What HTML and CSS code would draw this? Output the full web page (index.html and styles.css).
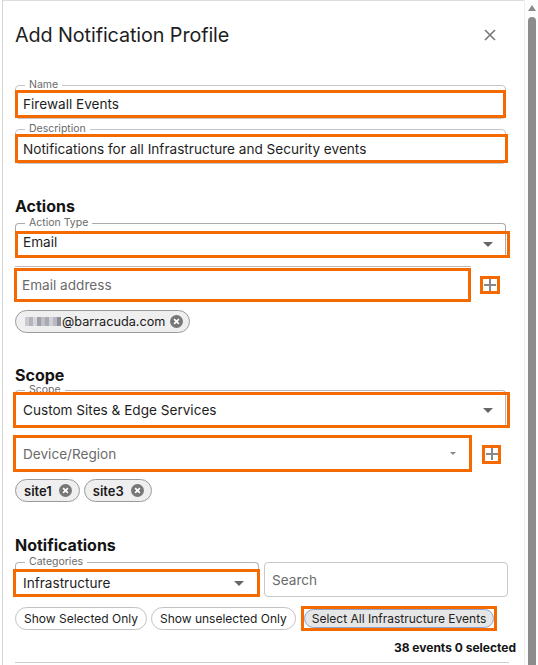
FILE: index.html
```html
<!DOCTYPE html>
<html>
<head>
<meta charset="utf-8">
<link rel="stylesheet" href="styles.css">
</head>
<body>
<div class="frame">
  <div class="content">
    <div class="header">
      <h1 class="title">Add Notification Profile</h1>
      <svg class="close" width="12" height="12" viewBox="0 0 12 12"><path d="M1 1L11 11M11 1L1 11" stroke="#777" stroke-width="1.6" fill="none"/></svg>
    </div>

    <div class="outlined f-name">
      <span class="lbl">Name</span>
      <div class="hl hl-text">Firewall Events</div>
    </div>

    <div class="outlined f-desc">
      <span class="lbl">Description</span>
      <div class="hl hl-text wide">Notifications for all Infrastructure and Security events</div>
    </div>

    <h2 class="section s-actions">Actions</h2>

    <div class="outlined f-action">
      <span class="lbl">Action Type</span>
      <div class="hl hl-select ext">Email<span class="caret"></span></div>
    </div>

    <div class="row-add r-email">
      <div class="topline">
        <div class="hl hl-input placeholder">Email address</div>
      </div>
      <div class="plus"><svg width="12" height="12" viewBox="0 0 12 12"><path d="M6 0V12M0 6H12" stroke="#888" stroke-width="2" fill="none"/></svg></div>
    </div>

    <div class="chips c-email">
      <span class="chip"><span class="mosaic"><i class="m1"></i><i class="m2"></i><i class="m3"></i><i class="m4"></i><i class="m5"></i><i class="m6"></i><i class="m7"></i><i class="m8"></i><i class="m9"></i></span>@barracuda.com<span class="del"><svg width="13" height="13" viewBox="0 0 12 12"><circle cx="6" cy="6" r="6" fill="#777"/><path d="M3.8 3.8L8.2 8.2M8.2 3.8L3.8 8.2" stroke="#fff" stroke-width="1.5"/></svg></span></span>
    </div>

    <h2 class="section s-scope">Scope</h2>

    <div class="outlined f-scope">
      <span class="lbl">Scope</span>
      <div class="hl hl-select tall ext2">Custom Sites &amp; Edge Services<span class="caret"></span></div>
    </div>

    <div class="row-add r-device">
      <div class="hl hl-input tall2 placeholder dev">Device/Region<span class="caret small"></span></div>
      <div class="plus p2"><svg width="12" height="12" viewBox="0 0 12 12"><path d="M6 0V12M0 6H12" stroke="#888" stroke-width="2" fill="none"/></svg></div>
    </div>

    <div class="chips c-sites">
      <span class="chip med">site1<span class="del"><svg width="13" height="13" viewBox="0 0 12 12"><circle cx="6" cy="6" r="6" fill="#777"/><path d="M3.8 3.8L8.2 8.2M8.2 3.8L3.8 8.2" stroke="#fff" stroke-width="1.5"/></svg></span></span>
      <span class="chip med">site3<span class="del"><svg width="13" height="13" viewBox="0 0 12 12"><circle cx="6" cy="6" r="6" fill="#777"/><path d="M3.8 3.8L8.2 8.2M8.2 3.8L3.8 8.2" stroke="#fff" stroke-width="1.5"/></svg></span></span>
    </div>

    <h2 class="section s-notif">Notifications</h2>

    <div class="cat-row">
      <div class="outlined f-cat">
        <span class="lbl">Categories</span>
        <div class="hl hl-select cat">Infrastructure<span class="caret"></span></div>
      </div>
      <div class="search placeholder">Search</div>
    </div>

    <div class="btn-row">
      <span class="pill">Show Selected Only</span>
      <span class="pill">Show unselected Only</span>
      <span class="hl-btn"><span class="pill active">Select All Infrastructure Events</span></span>
    </div>

    <div class="count">38 events 0 selected</div>
    <div class="bottom-line"></div>
  </div>

  <div class="scrollbar">
    <div class="sb-arrow"></div>
    <div class="sb-thumb"></div>
  </div>
</div>
</body>
</html>
```

FILE: styles.css
```css
* { box-sizing: border-box; }
html, body { margin: 0; padding: 0; background: #fff; }
body {
  font-family: Inter, "Noto Sans", sans-serif;
  color: #1c1c1c;
  width: 538px;
  height: 665px;
  overflow: hidden;
}
.frame {
  position: relative;
  margin-left: 2px;
  height: 665px;
  border-left: 1px solid #d4d4d4;
  border-top: 1px solid #dcdcdc;
}
.content {
  width: 505px;
  padding-left: 12px;
}
.header {
  display: flex;
  align-items: center;
  justify-content: space-between;
  padding-top: 22px;
  height: 46px;
}
.title {
  margin: 0;
  font-size: 19.8px;
  line-height: 24px;
  font-weight: 400;
  color: #1e1e1e;
  letter-spacing: -0.1px;
}
.close { margin-right: 12px; margin-top: 0; }

.outlined {
  position: relative;
  border: 1px solid #c6c6c6;
  border-radius: 4px;
}
.lbl {
  position: absolute;
  left: 9px;
  top: -8px;
  padding: 0 4px;
  background: #fff;
  font-size: 10.5px;
  line-height: 13px;
  color: #6a6a6a;
}
.hl {
  position: relative;
  z-index: 2;
  border: 3px solid #f46a00;
  background: transparent;
  font-size: 13.6px;
  color: #1e1e1e;
  display: flex;
  align-items: center;
  padding-left: 5px;
}
.f-name { margin-top: 38px; padding-top: 4px; margin-right: 2px; }
.f-name .hl { height: 28px; margin-left: -1px; margin-right: -1px; }
.f-desc { margin-top: 10px; padding-top: 4px; margin-right: 2px; }
.f-desc .hl { height: 29px; margin-left: -1px; margin-right: -3px; }

.section {
  margin: 0;
  font-size: 16px;
  line-height: 16px;
  font-weight: 700;
  color: #141414;
}
.s-actions { margin-top: 34px; }
.s-scope { margin-top: 34px; }
.s-notif { margin-top: 35px; }

.f-action { margin-top: 9px; padding-top: 7px; border-color: #ababab; border-bottom: none; margin-right: 2px; }
.hl-select { justify-content: space-between; padding-right: 14px; }
.f-action .hl { height: 27px; margin-left: -1px; margin-right: -5px; align-items: flex-start; line-height: 16px; padding-top: 0; }
.caret {
  width: 0; height: 0;
  border-left: 5px solid transparent;
  border-right: 5px solid transparent;
  border-top: 5px solid #666;
  align-self: center;
}
.caret.small {
  border-left-width: 3px;
  border-right-width: 3px;
  border-top-width: 3px;
  border-top-color: #888;
}

.row-add {
  display: flex;
  align-items: center;
}
.r-email { margin-top: 8px; }
.topline {
  border-top: 1px solid #bdbdbd;
  padding-top: 1px;
  width: 456px;
}
.hl-input { height: 34px; }
.topline .hl { margin-left: -1px; }
.placeholder { color: #6b6b6b; }
.plus {
  width: 20px;
  height: 18px;
  border: 3px solid #f46a00;
  margin-left: 9px;
  display: flex;
  align-items: center;
  justify-content: center;
  margin-top: 1px;
}
.plus svg { display: block; }

.chips { display: flex; gap: 4px; }
.c-email { margin-top: 8px; }
.c-sites { margin-top: 7px; }
.chip {
  display: inline-flex;
  align-items: center;
  height: 23px;
  border: 1px solid #9a9a9a;
  border-radius: 12px;
  background: #efefef;
  padding: 0 6px 0 9px;
  font-size: 12.7px;
  color: #1a1a1a;
}
.chip.med { font-size: 13px; font-weight: 600; padding-left: 8px; padding-right: 7px; }
.chip.med .del { margin-left: 7px; }
.del { display: inline-flex; margin-left: 5px; }
.mosaic { display: inline-flex; height: 9px; margin-right: 1px; }
.mosaic i { display: block; width: 4px; height: 9px; }
.m1 { background: #c9c9d0; }
.m2 { background: #b4b4bd; }
.m3 { background: #d6d6dc; }
.m4 { background: #9fa0a8; }
.m5 { background: #c0c0c8; }
.m6 { background: #a9aab2; }
.m7 { background: #d0d0d6; }
.m8 { background: #b8b9c1; }
.m9 { background: #8e8f98; }

.f-scope { margin-top: 7px; padding-top: 1px; border-color: #b8b8b8; border-bottom: none; margin-right: 2px; }
.f-scope .lbl { top: -6px; line-height: 10px; }
.f-scope .hl { height: 36px; margin-left: -3px; margin-right: -5px; padding-left: 7px; }
.r-device { margin-top: 7px; }
.dev { width: 459px; margin-left: -2px; padding-left: 7px; height: 37px; justify-content: space-between; padding-right: 13px; }
.p2 { margin-left: 10px; height: 19px; width: 19px; }

.cat-row { display: flex; margin-top: 9px; align-items: flex-start; }
.f-cat { width: 244px; padding-top: 6px; border-bottom: none; border-color: #b4b4b4; }
.f-cat .hl { height: 28px; margin-left: -3px; margin-right: -2px; padding-left: 7px; padding-right: 13px; }
.search {
  flex: 1;
  margin-left: 5px;
  height: 35px;
  border: 1px solid #c8c8c8;
  border-radius: 4px;
  display: flex;
  align-items: center;
  padding-left: 7px;
  font-size: 13.6px;
}

.btn-row {
  display: flex;
  align-items: center;
  margin-top: 9px;
  gap: 4px;
}
.pill {
  display: inline-flex;
  align-items: center;
  height: 23px;
  border: 1px solid #c2c2c2;
  border-radius: 12px;
  padding: 0 8px;
  font-size: 12px;
  color: #222;
  background: #fff;
}
.hl-btn {
  border: 3px solid #f46a00;
  margin-left: 1px;
  display: inline-flex;
}
.pill.active {
  background: #e6e6e6;
  border-color: #8aa6d6;
  height: 19px;
  padding: 0 7px;
  border-radius: 10px;
}
.count {
  text-align: right;
  margin-right: -8px;
  margin-top: 9px;
  font-size: 12px;
  line-height: 16px;
  font-weight: 700;
  color: #141414;
}
.bottom-line {
  margin-top: 6px;
  height: 1px;
  background: #cfcfcf;
  margin-right: -1px;
}

.scrollbar {
  position: absolute;
  top: -1px;
  left: 521px;
  width: 14px;
  height: 666px;
  border-left: 1px solid #f0f0f0;
  background: #fdfdfd;
}
.sb-arrow {
  position: absolute;
  left: 3px;
  top: 5px;
  width: 0; height: 0;
  border-left: 4px solid transparent;
  border-right: 4px solid transparent;
  border-bottom: 6px solid #8a8a8a;
}
.sb-thumb {
  position: absolute;
  left: 3px;
  top: 17px;
  width: 8px;
  bottom: 0;
  background: #8c8c8c;
  border-radius: 4px 4px 0 0;
}
```
